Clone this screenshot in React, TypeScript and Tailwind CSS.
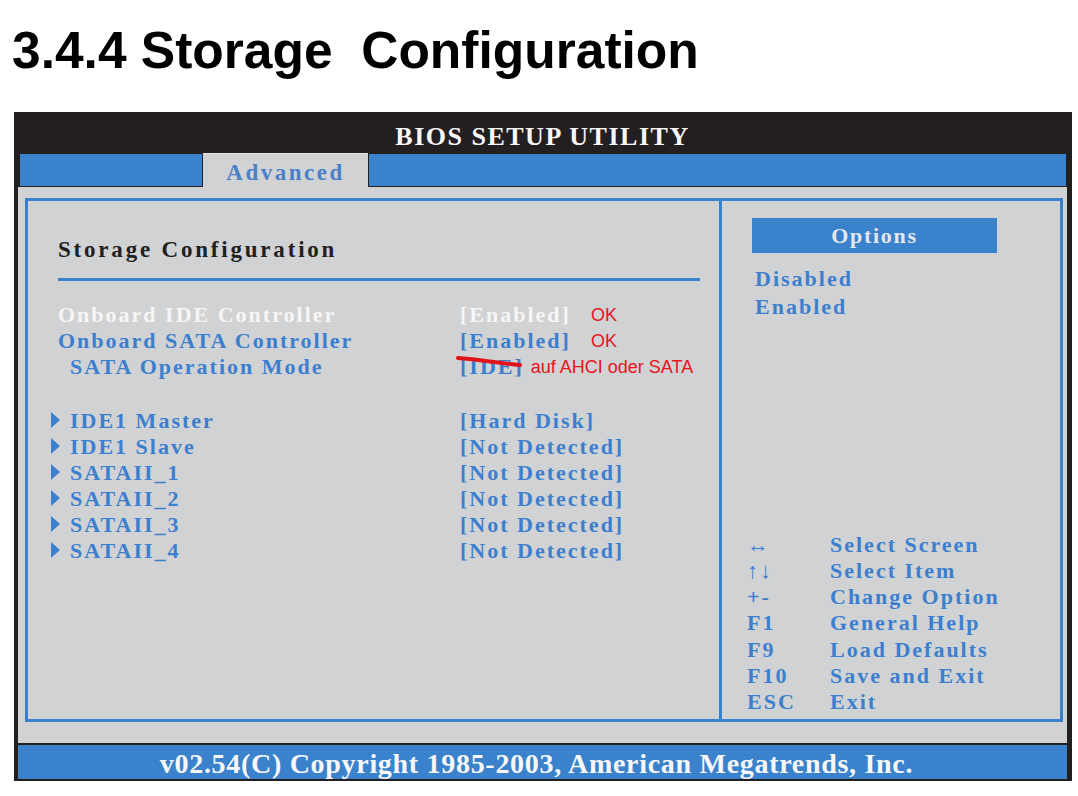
import React from "react";

const serif = "font-['Liberation_Serif',serif] font-bold";
const blue = "text-[#3d7fcf]";

type Row = { label: string; value: string; sub?: boolean; white?: boolean; indent?: boolean; note?: string; strike?: boolean };

const topRows: Row[] = [
  { label: "Onboard IDE Controller", value: "[Enabled]", white: true, note: "OK" },
  { label: "Onboard SATA Controller", value: "[Enabled]", note: "OK" },
  { label: "SATA Operation Mode", value: "[IDE]", indent: true, note: "auf AHCI oder SATA", strike: true },
];

const subRows: Row[] = [
  { label: "IDE1 Master", value: "[Hard Disk]", sub: true },
  { label: "IDE1 Slave", value: "[Not Detected]", sub: true },
  { label: "SATAII_1", value: "[Not Detected]", sub: true },
  { label: "SATAII_2", value: "[Not Detected]", sub: true },
  { label: "SATAII_3", value: "[Not Detected]", sub: true },
  { label: "SATAII_4", value: "[Not Detected]", sub: true },
];

const help = [
  ["↔", "Select Screen"],
  ["↑↓", "Select Item"],
  ["+-", "Change Option"],
  ["F1", "General Help"],
  ["F9", "Load Defaults"],
  ["F10", "Save and Exit"],
  ["ESC", "Exit"],
];

function ItemRow({ r }: { r: Row }) {
  const color = r.white ? "text-[#f6f6f6]" : blue;
  return (
    <div className={`flex items-center h-[26px] ${serif} text-[22px] tracking-[2px] ${color}`}>
      <div className={`flex items-center ${r.sub ? "-ml-[8px] w-[410px]" : "w-[402px]"} ${r.indent ? "pl-[12px]" : ""}`}>
        {r.sub && (
          <svg width="10" height="16" viewBox="0 0 10 16" className="mr-[10px]">
            <polygon points="1,0 10,8 1,16" fill="#3d7fcf" />
          </svg>
        )}
        {r.label}
      </div>
      <div className="relative">
        {r.value}
        {r.strike && (
          <svg width="70" height="16" viewBox="0 0 70 16" className="absolute left-[-4px] top-[4px]">
            <path d="M2 4 C 20 5, 40 9, 64 11" stroke="#e0121c" strokeWidth="4" fill="none" strokeLinecap="round" />
          </svg>
        )}
      </div>
      {r.note && (
        <div className={`pt-[2px] font-['Liberation_Sans',sans-serif] font-normal tracking-normal text-[18px] text-[#e8141c] ${r.strike ? "ml-[7px]" : "ml-[20px]"}`}>
          {r.note}
        </div>
      )}
    </div>
  );
}

export default function App() {
  return (
    <div className="w-[1078px] h-[796px] bg-white overflow-hidden">
      <div className="h-[112px] pt-[25px] pl-[12px]">
        <div className="font-['Liberation_Sans',sans-serif] font-bold text-[51.5px] leading-none text-black">
          3.4.4 Storage&nbsp; Configuration
        </div>
      </div>

      <div className="ml-[14px] w-[1058px] bg-[#231f20] pl-[4px] pr-[5px] pb-[2px]">
        <div className={`h-[41px] pt-[8px] flex items-center justify-center ${serif} text-[26px] tracking-[1.5px] text-[#f7f7f7]`}>
          BIOS SETUP UTILITY
        </div>

        <div className="h-[34px] flex">
          <div className="ml-[1px] w-[184px] bg-[#3a82cb] border border-[#231f20]" />
          <div className={`w-[165px] pt-[5px] bg-[#d1d2d4] border-t border-[#e4e4e4] flex items-center justify-center ${serif} text-[23px] tracking-[2.5px] text-[#4a80c8]`}>
            Advanced
          </div>
          <div className="flex-1 bg-[#3a82cb] border border-[#231f20]" />
        </div>

        <div className="h-[556px] bg-[#d1d2d4] pl-[7px] pr-[4px] pt-[11px] pb-[21px]">
          <div className="h-full border-[3px] border-[#3a82cb] flex">
            <div className="w-[694px] border-r-[3px] border-[#3a82cb] pl-[30px] pt-[36px]">
              <div className={`h-[26px] flex items-center ${serif} text-[23px] tracking-[2.8px] text-[#231f20]`}>
                Storage Configuration
              </div>
              <div className="mt-[15px] h-[3px] w-[642px] bg-[#3a82cb]" />
              <div className="mt-[20px]">
                {topRows.map((r) => (
                  <ItemRow key={r.label} r={r} />
                ))}
              </div>
              <div className="mt-[28px]">
                {subRows.map((r) => (
                  <ItemRow key={r.label} r={r} />
                ))}
              </div>
            </div>

            <div className="flex-1 flex flex-col pl-[30px] pt-[17px] pb-[4px]">
              <div className={`w-[245px] h-[35px] bg-[#3a82cb] flex items-center justify-center ${serif} text-[22px] tracking-[1.7px] text-[#e6e7ee]`}>
                Options
              </div>
              <div className={`mt-[11px] ml-[3px] ${serif} text-[22px] tracking-[2px] ${blue}`}>
                <div className="h-[28px] flex items-center">Disabled</div>
                <div className="h-[28px] flex items-center">Enabled</div>
              </div>
              <div className={`mt-auto -ml-[5px] ${serif} text-[22px] tracking-[2px] ${blue}`}>
                {help.map(([k, d]) => (
                  <div key={k} className="h-[26.3px] flex items-center">
                    <div className="w-[83px]">{k}</div>
                    <div>{d}</div>
                  </div>
                ))}
              </div>
            </div>
          </div>
        </div>

        <div className={`mt-[2px] h-[34px] pt-[3px] pr-[12px] bg-[#3a82cb] flex items-center justify-center ${serif} text-[28px] tracking-[0.7px] text-[#f7f7f7]`}>
          v02.54(C) Copyright 1985-2003, American Megatrends, Inc.
        </div>
      </div>
    </div>
  );
}
